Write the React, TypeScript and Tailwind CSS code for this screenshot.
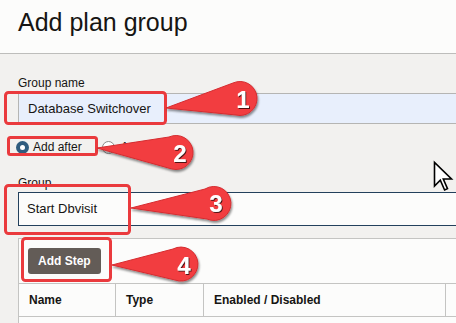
export default function App() {
  const font = { fontFamily: '"Liberation Sans", Arial, sans-serif' };

  return (
    <div className="relative w-[456px] h-[323px] overflow-hidden bg-[#f2f1ef] text-[#161513]" style={font}>
      {/* Header */}
      <div className="h-[54px] bg-[#fcfcfb] border-b border-[#bdbdbb] pl-[18px] pt-[7px]">
        <h1 className="text-[25px] leading-[30px] font-normal">Add plan group</h1>
      </div>

      {/* Form */}
      <div className="pl-[18px] pt-[21px]">
        <label className="block text-[12px] leading-4 mb-[2px]">Group name</label>
        <div className="h-[31px] w-[460px] bg-[#e8effc] border border-[#b5b5b3] flex items-center pl-[9px] text-[13px]">
          Database Switchover
        </div>

        <div className="mt-[15px] h-4 flex items-center text-[12px]">
          <span className="w-[13px] h-[13px] rounded-full bg-[#2f5c7e] flex items-center justify-center -ml-[2px] mr-[4px]">
            <span className="w-[5px] h-[5px] rounded-full bg-white" />
          </span>
          <span>Add after</span>
          <span className="ml-[20px] w-[13px] h-[13px] rounded-full bg-white border border-[#8a8a88] mr-[6px]" />
          <span>Add before</span>
        </div>

        <label className="block mt-[20px] text-[12px] leading-4 mb-[1px]">Group</label>
        <div className="h-[34px] w-[460px] bg-[#fcfcfb] border border-[#23405c] flex items-center pl-[8px] text-[13px]">
          Start Dbvisit
        </div>

        {/* Steps panel */}
        <div className="mt-[12px] w-[460px] h-[100px] bg-[#fcfcfb] border border-[#c4c4c2]">
          <div className="pl-[9px] pt-[9px] pb-[9px]">
            <button className="h-[26px] px-[10px] rounded-[3px] bg-[#635c57] text-white text-[12px] font-bold">
              Add Step
            </button>
          </div>
          <div className="flex h-[34px] border-t border-b border-[#c4c4c2] text-[12px] font-bold">
            <div className="w-[97px] flex items-center pl-[10px] border-r border-[#c4c4c2]">Name</div>
            <div className="w-[88px] flex items-center pl-[10px] border-r border-[#c4c4c2]">Type</div>
            <div className="w-[242px] flex items-center pl-[10px] border-r border-[#c4c4c2]">Enabled / Disabled</div>
          </div>
        </div>
      </div>

      {/* Callouts overlay */}
      <svg className="absolute inset-0 pointer-events-none" width="456" height="323" viewBox="0 0 456 323">
        <defs>
          <filter id="sh" x="-20%" y="-20%" width="140%" height="160%">
            <feDropShadow dx="1" dy="2" stdDeviation="1" floodColor="#000" floodOpacity="0.45" />
          </filter>
          <filter id="tsh" x="-30%" y="-30%" width="160%" height="160%">
            <feDropShadow dx="1" dy="1" stdDeviation="0.4" floodColor="#3a1010" floodOpacity="0.9" />
          </filter>
        </defs>

        <g fill="none" stroke="#ea3a3d" strokeWidth="3">
          <rect x="5.5" y="92.5" width="160" height="31" rx="3" />
          <rect x="8.5" y="137.5" width="88" height="17" rx="2" />
          <rect x="5.5" y="185.5" width="124" height="48" rx="3" />
          <rect x="22.5" y="238.5" width="88" height="42" rx="3" />
        </g>

        <g fill="#f23e40" stroke="#d52c30" strokeWidth="1" filter="url(#sh)">
          <path d="M166 108 L233 83 A17 17 0 1 1 236 115 Z" />
          <path d="M97 148 L169 137 A17 17 0 1 1 172 169 Z" />
          <path d="M131 208 L205 189 A17 17 0 1 1 207 219 Z" />
          <path d="M112 265 L173 249 A17 17 0 1 1 175 280 Z" />
        </g>

        <g fill="#ffffff" fontSize="24" fontWeight="bold" textAnchor="middle" filter="url(#tsh)" style={font}>
          <text x="243" y="108">1</text>
          <text x="180" y="162">2</text>
          <text x="216" y="212">3</text>
          <text x="184" y="274">4</text>
        </g>

        {/* Mouse cursor */}
        <path
          d="M434.5 162.5 L434.5 186 L440.3 180.2 L444.6 190 L447.5 188.6 L443.3 179 L451.5 179 Z"
          fill="#ffffff"
          stroke="#000000"
          strokeWidth="1.6"
          strokeLinejoin="miter"
        />
      </svg>
    </div>
  );
}
